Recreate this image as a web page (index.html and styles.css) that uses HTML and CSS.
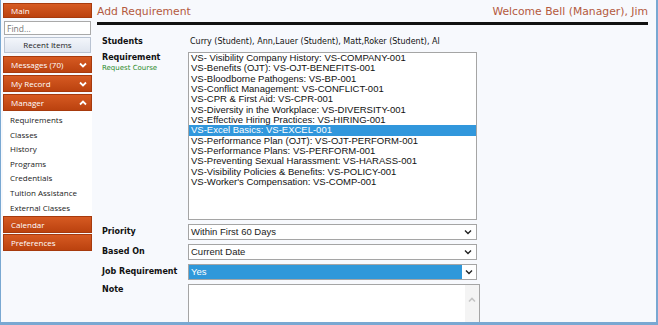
FILE: index.html
```html
<!DOCTYPE html>
<html lang="en">
<head>
    <meta charset="UTF-8">
    <meta name="viewport" content="width=device-width, initial-scale=1.0">
    <title>Add Requirement</title>
<link rel="stylesheet" href="styles.css">
</head>
<body>
<div class="frame">
  <div class="sidebar">
    <div class="nav-head first">Main</div>
    <input class="find" type="text" placeholder="Find...">
    <div class="recent-btn">Recent Items</div>
    <div class="nav-head">Messages (70)
      <svg class="chev" viewBox="0 0 8 6"><path d="M1 1.5 L4 4.5 L7 1.5" /></svg>
    </div>
    <div class="nav-head">My Record
      <svg class="chev" viewBox="0 0 8 6"><path d="M1 1.5 L4 4.5 L7 1.5" /></svg>
    </div>
    <div class="nav-head flush">Manager
      <svg class="chev" viewBox="0 0 8 6"><path d="M1 4.5 L4 1.5 L7 4.5" /></svg>
    </div>
    <ul class="nav-links">
      <li>Requirements</li>
      <li>Classes</li>
      <li>History</li>
      <li>Programs</li>
      <li>Credentials</li>
      <li>Tuition Assistance</li>
      <li>External Classes</li>
    </ul>
    <div class="nav-head tight">Calendar</div>
    <div class="nav-head tight">Preferences</div>
  </div>

  <div class="main">
    <div class="page-head">
      <h1>Add Requirement</h1>
      <div class="welcome">Welcome Bell (Manager), Jim</div>
    </div>

    <div class="form">
      <div class="label">Students</div>
      <div class="value">Curry (Student), Ann,Lauer (Student), Matt,Roker (Student), Al</div>

      <div class="label">Requirement<span class="sub">Request Course</span></div>
      <div class="listbox">
        <div class="opt">VS- Visibility Company History: VS-COMPANY-001</div>
        <div class="opt">VS-Benefits (OJT): VS-OJT-BENEFITS-001</div>
        <div class="opt">VS-Bloodborne Pathogens: VS-BP-001</div>
        <div class="opt">VS-Conflict Management: VS-CONFLICT-001</div>
        <div class="opt">VS-CPR &amp; First Aid: VS-CPR-001</div>
        <div class="opt">VS-Diversity in the Workplace: VS-DIVERSITY-001</div>
        <div class="opt">VS-Effective Hiring Practices: VS-HIRING-001</div>
        <div class="opt selected">VS-Excel Basics: VS-EXCEL-001</div>
        <div class="opt">VS-Performance Plan (OJT): VS-OJT-PERFORM-001</div>
        <div class="opt">VS-Performance Plans: VS-PERFORM-001</div>
        <div class="opt">VS-Preventing Sexual Harassment: VS-HARASS-001</div>
        <div class="opt">VS-Visibility Policies &amp; Benefits: VS-POLICY-001</div>
        <div class="opt">VS-Worker's Compensation: VS-COMP-001</div>
      </div>

      <div class="label mid">Priority</div>
      <div class="select">Within First 60 Days
        <svg class="sel-chev" viewBox="0 0 8 6"><path d="M1 1.5 L4 4.5 L7 1.5" /></svg>
      </div>

      <div class="label mid">Based On</div>
      <div class="select">Current Date
        <svg class="sel-chev" viewBox="0 0 8 6"><path d="M1 1.5 L4 4.5 L7 1.5" /></svg>
      </div>

      <div class="label mid">Job Requirement</div>
      <div class="select active">Yes
        <span class="chev-box"><svg class="sel-chev" viewBox="0 0 8 6"><path d="M1 1.5 L4 4.5 L7 1.5" /></svg></span>
      </div>

      <div class="label">Note</div>
      <div class="note">
        <div class="note-area"></div>
        <div class="scrollbar">
          <svg class="up" viewBox="0 0 8 6"><path d="M1 4.5 L4 1.5 L7 4.5" /></svg>
        </div>
      </div>
    </div>
  </div>
</div>
</body>
</html>
```

FILE: styles.css
```css
* {
  box-sizing: border-box;
}

body {
  margin: 0;
  background-color: #f7f9fd;
}

.frame {
  width: 658px;
  height: 325px;
  display: flex;
  overflow: hidden;
  border-left: 1px solid #79a8d2;
  border-right: 2px solid #79a8d2;
  border-bottom: 3px solid #79a8d2;
  background-color: #f7f9fd;
}

/* left navigation */
.sidebar {
  width: 89px;
  margin-left: 2px;
  padding-top: 3px;
  font-family: 'Open Sans', sans-serif;
  font-size: 8px;
  flex-shrink: 0;
}

.nav-head {
  position: relative;
  height: 17px;
  line-height: 15px;
  padding-left: 7px;
  margin-bottom: 2px;
  color: white;
  background: linear-gradient(#d65a22, #bb420f);
  border: 1px solid #a73a0d;
}

.nav-head.first {
  height: 15px;
  line-height: 13px;
  margin-bottom: 3px;
}

.nav-head.flush {
  margin-bottom: 0;
}

.nav-head.tight {
  margin-bottom: 1px;
}

.chev {
  position: absolute;
  right: 4px;
  top: 5px;
  width: 8px;
  height: 6px;
  fill: none;
  stroke: white;
  stroke-width: 1.8;
}

.find {
  display: block;
  width: 87px;
  height: 14px;
  margin: 0 0 2px 1px;
  padding: 0 2px;
  border: 1px solid #a9a9a9;
  font-family: 'Open Sans', sans-serif;
  font-size: 8.5px;
  background: white;
}

.find::placeholder {
  color: #777;
}

.recent-btn {
  height: 16px;
  line-height: 14px;
  margin: 0 0 3px 1px;
  width: 87px;
  text-align: center;
  color: #222;
  border: 1px solid #b9c3d2;
  background: linear-gradient(#f3f6fb, #dfe5ef);
}

.nav-links {
  list-style: none;
  margin: 0;
  padding: 2px 0 1px 7px;
  background: white;
}

.nav-links li {
  height: 14.6px;
  line-height: 14.6px;
  color: #222;
}

/* main content */
.main {
  flex: 1;
  padding: 4px 8px 0 5px;
}

.page-head {
  display: flex;
  justify-content: space-between;
  align-items: center;
  margin-bottom: 3px;
  border-bottom: 3px solid #111;
  height: 21px;
  padding-bottom: 3px;
  font-family: 'DejaVu Sans', sans-serif;
  font-size: 10.8px;
  color: #b45a3e;
}

.page-head h1 {
  margin: 0;
  font-size: 10.8px;
  font-weight: normal;
}

.form {
  display: grid;
  grid-template-columns: 86px 290px;
  row-gap: 4px;
  padding: 8px 0 0 5px;
  font-family: 'DejaVu Sans', sans-serif;
  font-size: 8px;
  color: #111;
}

.label {
  font-weight: bold;
  line-height: 12px;
  padding-top: 0;
}

.label.mid {
  padding-top: 2px;
}

.sub {
  display: block;
  font-weight: normal;
  font-size: 7px;
  line-height: 9px;
  color: #2a8a2a;
}

.value {
  line-height: 12px;
  padding-left: 2px;
  white-space: nowrap;
}

.listbox {
  width: 289px;
  height: 168px;
  border: 1px solid #a5a5a5;
  background: white;
  font-family: 'Liberation Sans', Arial, sans-serif;
  font-size: 9.5px;
  color: #111;
}

.opt {
  height: 10.35px;
  line-height: 10.35px;
  padding-left: 2px;
  white-space: nowrap;
}

.opt.selected {
  background-color: #3197dc;
  color: white;
}

.select {
  position: relative;
  width: 289px;
  height: 16px;
  line-height: 14px;
  padding-left: 2px;
  border: 1px solid #a5a5a5;
  background: white;
  font-family: 'Liberation Sans', Arial, sans-serif;
  font-size: 9.5px;
  color: #222;
}

.select.active {
  background-color: #2f98da;
  color: white;
}

.sel-chev {
  position: absolute;
  right: 4px;
  top: 4px;
  width: 8px;
  height: 6px;
  fill: none;
  stroke: #222;
  stroke-width: 1.4;
}

.chev-box {
  position: absolute;
  right: 0;
  top: 0;
  width: 14px;
  height: 14px;
  background: white;
}

.chev-box .sel-chev {
  right: 3px;
}

.note {
  display: flex;
  width: 292px;
  height: 60px;
  border: 1px solid #a5a5a5;
  background: white;
}

.note-area {
  flex: 1;
}

.scrollbar {
  width: 14px;
  background: #f4f4f4;
  padding-top: 12px;
  display: flex;
  justify-content: center;
}

.up {
  width: 8px;
  height: 6px;
  fill: none;
  stroke: #c4c4c4;
  stroke-width: 1.6;
}
```
